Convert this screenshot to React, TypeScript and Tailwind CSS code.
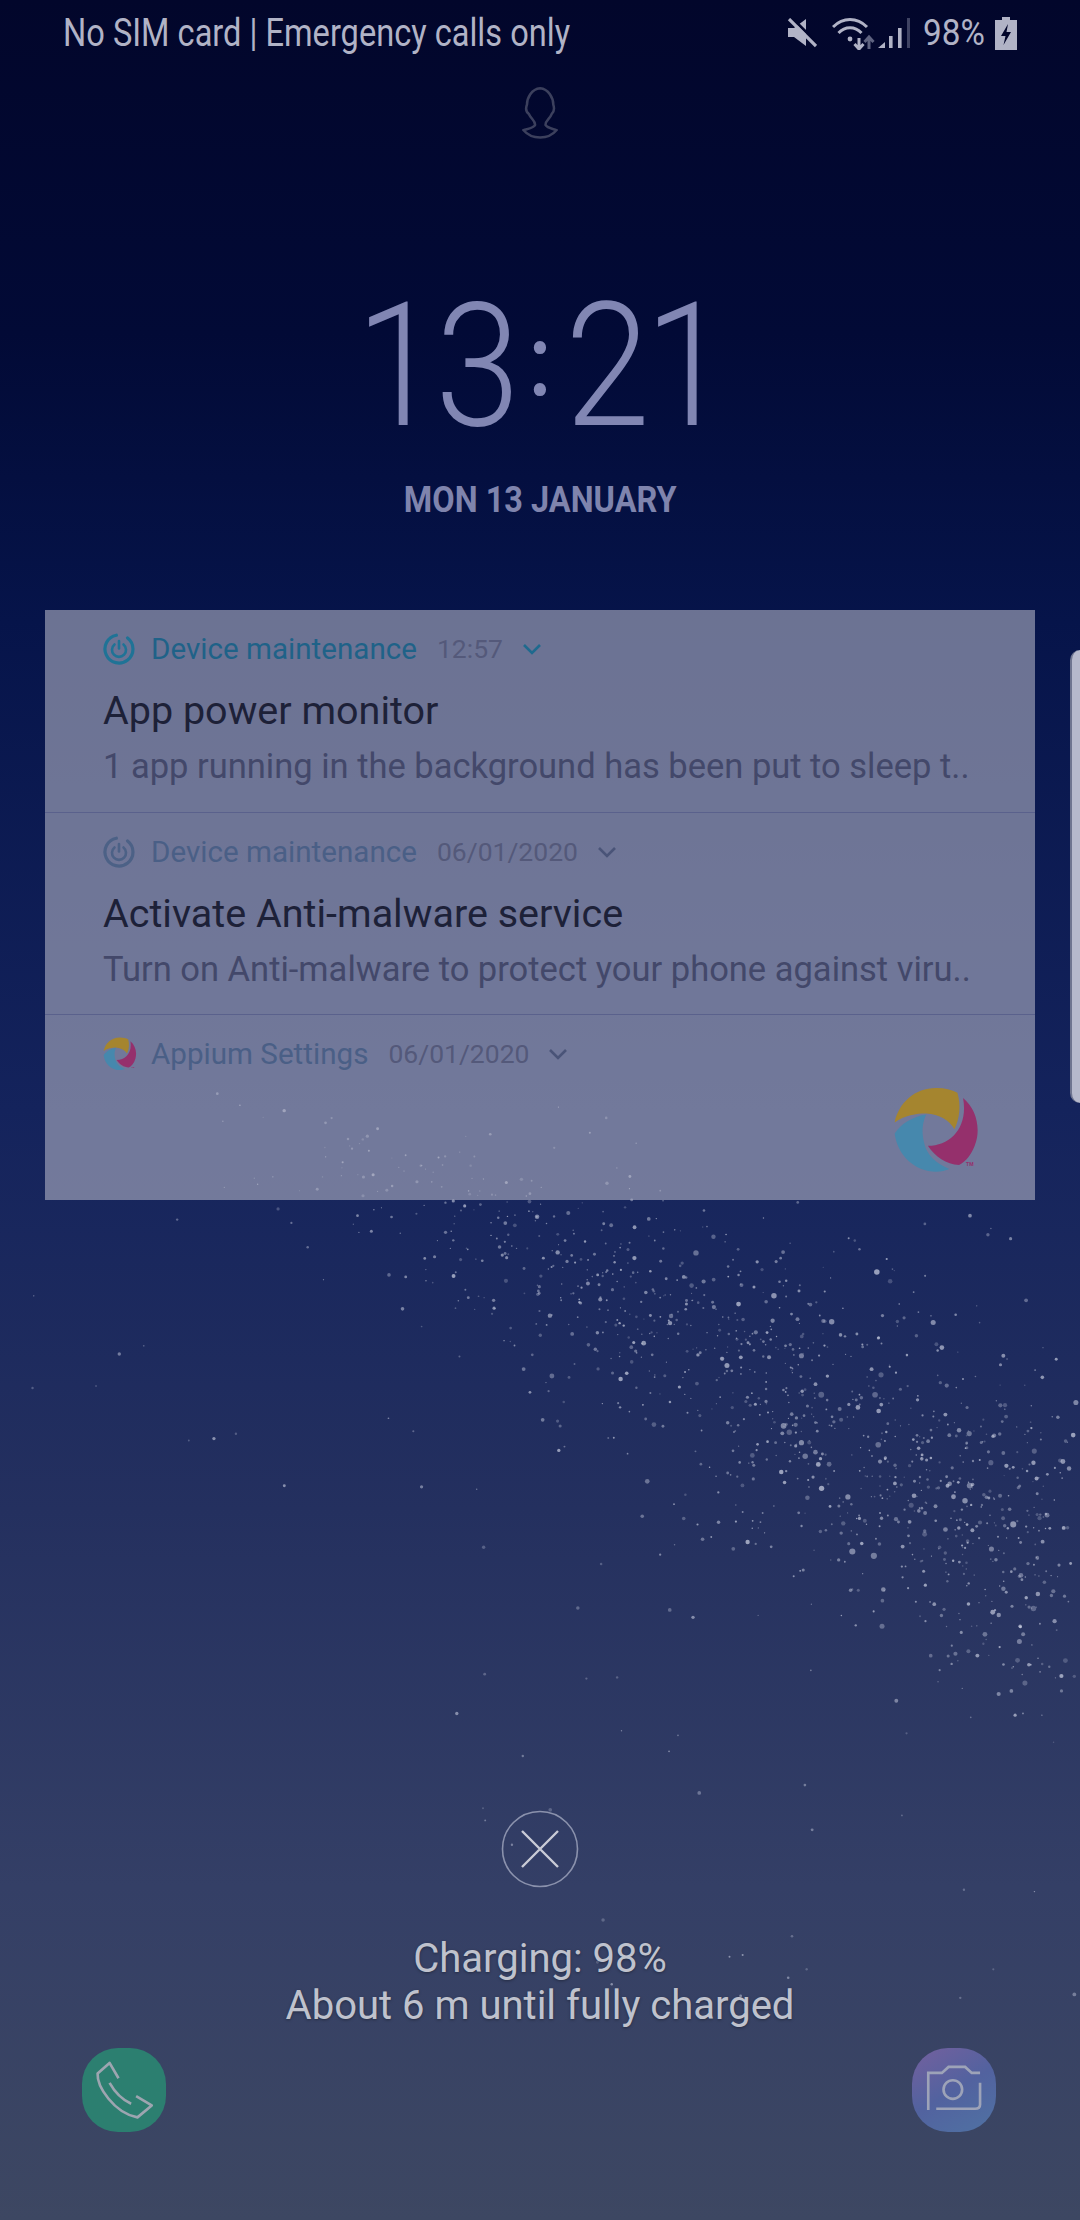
import React, { useMemo } from 'react'

// seeded random so the star field is the same on every load
const makeStars = () => {
    let seed = 1337
    const rnd = () => {
        seed = (seed * 16807) % 2147483647
        return seed / 2147483647
    }
    const gauss = () => (rnd() + rnd() + rnd() + rnd() - 2) / 0.82
    const stars: { x: number; y: number; r: number; o: number }[] = []

    // dense band, running from the panel down to the right edge
    for (let i = 0; i < 1250; i++) {
        const t = Math.pow(rnd(), 0.6)
        const cx = 300 + t * 780
        const cy = 1130 + t * 430
        const x = cx + gauss() * 75
        const y = cy + gauss() * (45 + t * 85)
        stars.push({ x, y, r: 0.6 + rnd() * rnd() * (1.6 + t * 1.4), o: 0.25 + rnd() * 0.5 })
    }
    // sparse stars all over the lower half
    for (let i = 0; i < 150; i++) {
        const x = rnd() * 1080
        const y = 1200 + rnd() * 800
        if (y > 1500 && x < 450) continue
        stars.push({ x, y, r: 0.7 + rnd() * 1.2, o: 0.25 + rnd() * 0.4 })
    }
    return stars
}

const AppiumLogo = ({ className }: { className: string }) => (
    <svg className={className} viewBox="95 85 262 262">
        <path d="M100 192 C130 170 165 165 195 165 C235 168 265 185 280 212 C296 180 300 140 289 102 C272 94 250 88 228 88 C165 86 112 130 100 192Z" fill="#a5852f" />
        <path d="M306 118 C345 150 358 205 345 250 C335 285 315 310 294 320 C255 318 222 295 200 262 C270 262 322 205 306 118Z" fill="#95306c" />
        <path d="M195 168 C150 175 118 198 100 225 C108 290 160 340 225 340 C240 340 253 337 265 332 C225 315 195 290 188 250 C180 215 185 190 195 168Z" fill="#4688ad" />
        <text x="315" y="322" fontSize="15" fontWeight="700" fill="#95306c">TM</text>
    </svg>
)

const MaintenanceIcon = ({ color }: { color: string }) => (
    <svg className="w-[32px] h-[32px]" viewBox="0 0 32 32" fill="none" stroke={color} strokeLinecap="round">
        <path d="M11 2.9 A14 14 0 1 0 22.5 3.6" strokeWidth="3.2" transform="rotate(10 16 16)" />
        <path d="M11.5 11.5 A7 7 0 1 0 20.5 11.5" strokeWidth="2.6" />
        <path d="M16 8 V15.5" strokeWidth="2.6" />
    </svg>
)

const Chevron = ({ color }: { color: string }) => (
    <svg className="w-[20px] h-[12px]" viewBox="0 0 20 12" fill="none" stroke={color} strokeWidth="2.6">
        <path d="M2 2 L10 10 L18 2" />
    </svg>
)

const RowHeader = ({
    icon,
    app,
    appColor,
    time,
    chevron,
}: {
    icon: React.ReactNode
    app: string
    appColor: string
    time: string
    chevron: string
}) => (
    <div className="flex items-center h-[32px]">
        <div className="w-[34px] flex justify-start">{icon}</div>
        <span className={`ml-[14px] text-[29.6px] leading-[32px] ${appColor}`}>{app}</span>
        <span className="ml-[20px] text-[26.5px] leading-[32px] text-[#54597a]">{time}</span>
        <div className="ml-[19px]">
            <Chevron color={chevron} />
        </div>
    </div>
)

const NotificationRow = ({
    title,
    body,
    ...header
}: {
    icon: React.ReactNode
    app: string
    appColor: string
    time: string
    chevron: string
    title: string
    body: string
}) => (
    <div className="h-[202.5px] pl-[58px] pt-[23px] border-b border-[#5a618c]">
        <RowHeader {...header} />
        <div className="mt-[23px] text-[39.5px] leading-[46px] text-[#1d2138] whitespace-nowrap">{title}</div>
        <div className="mt-[11px] text-[34.5px] leading-[42px] text-[#43486a] whitespace-nowrap">{body}</div>
    </div>
)

const App = () => {
    const stars = useMemo(makeStars, [])

    return (
        <div
            className="relative w-[1080px] h-[2220px] overflow-hidden flex flex-col bg-[linear-gradient(180deg,#02062b_0%,#020a36_15%,#06144a_28%,#14235c_50%,#24305f_68%,#343f66_85%,#3d4762_100%)]"
            style={{ fontFamily: 'Roboto, sans-serif' }}
        >
            {/* star field */}
            <svg className="absolute inset-0" width="1080" height="2220">
                {stars.map((s, i) => (
                    <circle key={i} cx={s.x} cy={s.y} r={s.r} fill="#c4c9dc" opacity={s.o} />
                ))}
            </svg>

            {/* edge panel handle */}
            <div className="absolute right-0 top-[650px] w-[10px] h-[453px] rounded-l-[10px] bg-[#b6b9cc] border-l-2 border-[#6f7590]" />

            {/* status bar */}
            <div className="relative flex items-center h-[66px] pl-[63px] pr-[63px] justify-between">
                <span className="text-[38px] leading-[40px] text-[#b1b3c6] origin-left scale-x-[0.857] inline-block whitespace-nowrap">
                    No SIM card | Emergency calls only
                </span>
                <div className="flex items-center text-[#b1b3c6]">
                    <svg className="w-[30px] h-[30px]" viewBox="0 0 30 30">
                        <path d="M1 10 H7 L19 1 V28 L7 19 H1Z" fill="#b1b3c6" />
                        <path d="M5 0 L31 26" stroke="#01052a" strokeWidth="3" />
                        <path d="M2 1 L29 28" stroke="#b1b3c6" strokeWidth="3.2" />
                    </svg>
                    <svg className="ml-[15px] w-[46px] h-[34px]" viewBox="0 0 46 34" fill="none" stroke="#b1b3c6" strokeWidth="3">
                        <path d="M1 11 C11 1 25 1 35 11" />
                        <path d="M6.5 17 C13 10 23 10 29.5 17" />
                        <circle cx="18" cy="23" r="2.4" fill="#b1b3c6" stroke="none" />
                        <path d="M27 22 V33 M22.5 28 L27 33 L31.5 28" />
                        <path d="M37 33 V21 M32.5 26 L37 21 L41.5 26" stroke="#5f6380" />
                    </svg>
                    <svg className="w-[32px] h-[32px]" viewBox="0 0 32 32">
                        <path d="M0 31 L7 25 V31Z" fill="#b1b3c6" />
                        <rect x="11" y="19" width="3.6" height="12" fill="#b1b3c6" />
                        <rect x="20" y="11" width="3.6" height="20" fill="#b1b3c6" />
                        <rect x="29" y="1" width="3" height="30" fill="#3f4363" />
                    </svg>
                    <span className="ml-[13px] text-[37px] leading-[40px] origin-left scale-x-[0.9] inline-block w-[62px] whitespace-nowrap">98%</span>
                    <svg className="ml-[10px] w-[22px] h-[33px]" viewBox="0 0 22 33">
                        <path d="M7 0 H15 V3 H22 V33 H0 V3 H7Z" fill="#b1b3c6" />
                        <path d="M13 7 L6 19 H10.5 L8.5 28 L16 15 H11.5Z" fill="#01052a" />
                    </svg>
                </div>
            </div>

            {/* avatar */}
            <div className="relative flex justify-center mt-[19px]">
                <svg className="w-[36px] h-[56px]" viewBox="60 42 115 170" fill="none" stroke="#3c405d" strokeWidth="8">
                    <path d="M118 48 C145 50 160 80 160 100 C165 115 160 125 155 130 C150 145 135 150 135 165 C140 175 160 178 170 182 C155 200 135 205 118 205 C100 205 80 200 65 182 C75 178 98 175 102 165 C102 150 88 145 82 130 C75 125 70 115 76 100 C76 80 90 50 118 48Z" />
                </svg>
            </div>

            {/* clock */}
            <div className="relative mt-[140px] h-[170px] flex items-baseline justify-center scale-x-[0.89] text-[#8186b3] font-light whitespace-nowrap">
                <span className="text-[172px] leading-[170px] tracking-[-6px]">13</span>
                <span className="relative -top-[30px] mx-[15px] text-[100px] leading-[170px] font-medium">:</span>
                <span className="text-[172px] leading-[170px] tracking-[-6px]">21</span>
            </div>
            <div className="relative mt-[27px] h-[44px] flex justify-center">
                <span className="text-[36.5px] leading-[44px] font-bold text-[#7f84ad] scale-x-[0.89] inline-block whitespace-nowrap">MON 13 JANUARY</span>
            </div>

            {/* notifications */}
            <div className="relative mt-[88px] mx-[45px] h-[590px] bg-[#b0b3c4]/60 overflow-hidden">
                <NotificationRow
                    icon={<MaintenanceIcon color="#1f7396" />}
                    app="Device maintenance"
                    appColor="text-[#1f6288]"
                    time="12:57"
                    chevron="#1f6a8e"
                    title="App power monitor"
                    body="1 app running in the background has been put to sleep t.."
                />
                <NotificationRow
                    icon={<MaintenanceIcon color="#4c6186" />}
                    app="Device maintenance"
                    appColor="text-[#4a5f86]"
                    time="06/01/2020"
                    chevron="#4a5478"
                    title="Activate Anti-malware service"
                    body="Turn on Anti-malware to protect your phone against viru.."
                />
                <div className="pl-[58px] pt-[23px]">
                    <RowHeader
                        icon={<AppiumLogo className="w-[34px] h-[34px]" />}
                        app="Appium Settings"
                        appColor="text-[#4a5f86]"
                        time="06/01/2020"
                        chevron="#4a5478"
                    />
                    <div className="flex justify-end pr-[55px] mt-[17px]">
                        <AppiumLogo className="w-[87px] h-[87px]" />
                    </div>
                </div>
            </div>

            {/* dismiss */}
            <div className="relative mt-[610px] flex justify-center">
                <svg className="w-[78px] h-[78px]" viewBox="0 0 78 78" fill="none">
                    <circle cx="39" cy="39" r="37.5" stroke="#8b92ad" strokeWidth="1.6" />
                    <path d="M21 21 L57 57 M57 21 L21 57" stroke="#c9cbd6" strokeWidth="2.4" />
                </svg>
            </div>

            {/* charging text */}
            <div className="relative mt-[47px] text-center text-[40px] leading-[47px] text-[#bfc2cd] [text-shadow:0_1px_3px_rgba(0,0,0,0.35)]">
                <div>Charging: 98%</div>
                <div>About 6 m until fully charged</div>
            </div>

            {/* shortcuts */}
            <div className="relative mt-[19px] flex justify-between pl-[82px] pr-[84px]">
                <div className="w-[84px] h-[84px] rounded-[36px] bg-[#2c7f70]">
                    <svg className="w-[84px] h-[84px]" viewBox="65 55 253 253" fill="none" stroke="#9da5b0" strokeWidth="8" strokeLinejoin="round">
                        <path d="M175 146 L148 100 L112 132 C110 170 160 250 232 264 L275 228 L228 200" />
                        <path d="M148 160 C165 190 185 210 213 223" />
                    </svg>
                </div>
                <div className="w-[84px] h-[84px] rounded-[36px] bg-[linear-gradient(150deg,#74609e_0%,#52629f_50%,#4f72a3_100%)]">
                    <svg className="w-[84px] h-[84px]" viewBox="65 55 253 253" fill="none" stroke="#9da3b8" strokeWidth="8">
                        <path d="M114 242 V130 H155 L175 112 H225 L245 130 H270" />
                        <path d="M270 160 V225 Q270 238 255 238 H138" />
                        <circle cx="188" cy="180" r="28" />
                    </svg>
                </div>
            </div>
        </div>
    )
}

export default App
